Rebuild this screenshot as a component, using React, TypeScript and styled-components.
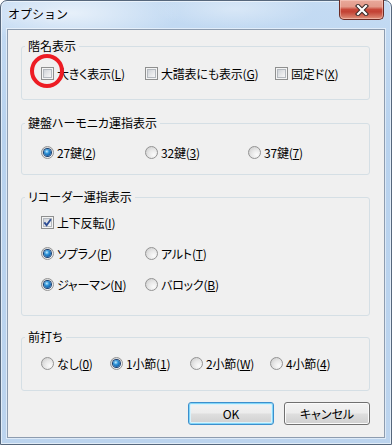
import React from "react";
import styled, { createGlobalStyle } from "styled-components";

const FONT = `"Noto Sans CJK JP", "Noto Sans", sans-serif`;

const COLORS = {
  client: "#f0f0f0",
  groupLine: "#d5dfe5",
  boxBorder: "#8e8f8f",
  text: "#000",
};

const GlobalStyle = createGlobalStyle`
  html, body { margin: 0; padding: 0; background: #fff; }
  body { font-family: ${FONT}; }
`;

const Window = styled.div`
  position: relative;
  width: 392px;
  height: 445px;
  box-sizing: border-box;
  display: flex;
  flex-direction: column;
  border: 1px solid #56677c;
  border-radius: 7px 7px 0 0;
  background:
    radial-gradient(ellipse 110px 30px at 18% 12px, rgba(255, 255, 255, 0.6), transparent),
    radial-gradient(ellipse 80px 20px at 60% 8px, rgba(255, 255, 255, 0.35), transparent),
    linear-gradient(180deg, #c4dbf3 0%, #b8d2ee 30%, #bcd4ee 100%);
  box-shadow: inset 0 0 0 1px rgba(255, 255, 255, 0.55);
  font-family: ${FONT};
  font-size: 12px;
  color: ${COLORS.text};
`;

const TitleBar = styled.div`
  height: 28px;
  display: flex;
  align-items: flex-start;
  justify-content: space-between;
  flex: none;
`;

const Title = styled.span`
  padding-left: 7px;
  line-height: 26px;
  font-size: 12px;
  text-shadow: 0 0 6px rgba(255, 255, 255, 0.9);
`;

const CloseButton = styled.div`
  width: 45px;
  height: 20px;
  margin: -1px 7px 0 0;
  box-sizing: border-box;
  border: 1px solid #6b2b24;
  border-top: none;
  border-radius: 0 0 5px 5px;
  background: linear-gradient(
    180deg,
    #e9a99b 0%,
    #e39a8a 35%,
    #c8493a 50%,
    #c24234 62%,
    #d3705d 85%,
    #e1937c 100%
  );
  box-shadow: inset 0 0 0 1px rgba(255, 220, 210, 0.45);
  display: flex;
  align-items: center;
  justify-content: center;
`;

const Client = styled.div`
  flex: 1;
  margin: 0 6px 6px;
  border: 1px solid #8d9caf;
  background: ${COLORS.client};
  box-shadow: 0 0 0 1px rgba(255, 255, 255, 0.5);
  padding: 9px 14px 0 13px;
  display: flex;
  flex-direction: column;
`;

const Group = styled.fieldset<{ $mt: number }>`
  margin: ${(p) => p.$mt}px 0 0;
  padding: 0;
  border: 1px solid ${COLORS.groupLine};
  border-radius: 3px;
  min-inline-size: auto;
`;

const Legend = styled.legend`
  margin-left: 3px;
  padding: 0 3px;
  line-height: 14px;
  font-size: 12px;
  font-feature-settings: "palt";
`;

const GroupBody = styled.div<{ $pt: number; $pb: number }>`
  padding: ${(p) => p.$pt}px 0 ${(p) => p.$pb}px 19px;
  display: flex;
  flex-direction: column;
  gap: 10px;
`;

const Row = styled.div`
  height: 21px;
  display: flex;
  align-items: center;
`;

const Option = styled.label<{ $w?: number }>`
  display: flex;
  align-items: center;
  gap: 3px;
  width: ${(p) => (p.$w ? `${p.$w}px` : "auto")};
  flex: none;
  white-space: nowrap;
  font-size: 12px;
  line-height: 14px;
  font-feature-settings: "palt";
  letter-spacing: -0.2px;
`;

const Key = styled.span`
  text-decoration: underline;
  text-underline-offset: 1px;
`;

const CheckBox = styled.span`
  position: relative;
  width: 13px;
  height: 13px;
  box-sizing: border-box;
  flex: none;
  border: 1px solid ${COLORS.boxBorder};
  background: #f4f4f4;

  &::before {
    content: "";
    position: absolute;
    inset: 1px;
    border: 1px solid #b4b9bf;
    background: linear-gradient(135deg, #cfd3d8 0%, #e6e7e9 55%, #f7f7f7 100%);
  }

  svg {
    position: absolute;
    left: -1px;
    top: -1px;
  }
`;

const Radio = styled.span<{ $checked?: boolean }>`
  width: 13px;
  height: 13px;
  box-sizing: border-box;
  flex: none;
  border-radius: 50%;
  border: 1px solid #939393;
  background: radial-gradient(circle at 70% 70%, #fbfbfb 0%, #e8e8e8 45%, #c8c8c8 100%);
  display: flex;
  align-items: center;
  justify-content: center;

  &::after {
    content: "";
    display: ${(p) => (p.$checked ? "block" : "none")};
    width: 7px;
    height: 7px;
    border-radius: 50%;
    background: radial-gradient(circle at 40% 35%, #c6ecff 0%, #2f94d8 35%, #0a4b94 85%);
    box-shadow: 0 0 0 1px #1a3f70;
  }
`;

const ButtonRow = styled.div`
  margin-top: 11px;
  display: flex;
  justify-content: flex-end;
  gap: 10px;
`;

const Button = styled.button<{ $default?: boolean }>`
  width: 86px;
  height: 23px;
  box-sizing: border-box;
  padding: 0;
  border-radius: 3px;
  border: 1px solid ${(p) => (p.$default ? "#3c8fcd" : "#707070")};
  box-shadow: ${(p) =>
    p.$default
      ? "inset 0 0 0 1px #82d6f8, inset 0 0 0 2px #d8f2fc"
      : "inset 0 0 0 1px #fbfbfb"};
  background: linear-gradient(180deg, #f3f3f3 0%, #ececec 48%, #dedede 52%, #d0d0d0 100%);
  font-family: ${FONT};
  font-size: 12px;
  font-feature-settings: "palt";
  color: #000;
`;

const Annotation = styled.div`
  position: absolute;
  left: 29px;
  top: 53px;
  width: 34px;
  height: 34px;
  box-sizing: border-box;
  border: 4px solid #ed1c24;
  border-radius: 50%;
  pointer-events: none;
`;

const Check = ({ checked }: { checked?: boolean }) => (
  <CheckBox>
    {checked && (
      <svg width="13" height="13" viewBox="0 0 13 13">
        <path d="M3.3 6.4 L5.6 9.2 L9.9 3.2" fill="none" stroke="#2d4d94" strokeWidth="1.9" />
      </svg>
    )}
  </CheckBox>
);

const CloseGlyph = () => (
  <svg width="14" height="12" viewBox="0 0 14 12">
    <path d="M3 2 L11 10 M11 2 L3 10" stroke="#3a2a28" strokeWidth="4.2" strokeLinecap="square" />
    <path d="M3 2 L11 10 M11 2 L3 10" stroke="#fff" strokeWidth="2.2" strokeLinecap="square" />
  </svg>
);

const CheckOption = ({ w, label, k, checked }: { w?: number; label: string; k: string; checked?: boolean }) => (
  <Option $w={w}>
    <Check checked={checked} />
    <span>
      {label}(<Key>{k}</Key>)
    </span>
  </Option>
);

const RadioOption = ({ w, label, k, checked }: { w?: number; label: string; k: string; checked?: boolean }) => (
  <Option $w={w}>
    <Radio $checked={checked} />
    <span>
      {label}(<Key>{k}</Key>)
    </span>
  </Option>
);

export default function App() {
  return (
    <>
      <GlobalStyle />
      <Window>
        <TitleBar>
          <Title>オプション</Title>
          <CloseButton>
            <CloseGlyph />
          </CloseButton>
        </TitleBar>
        <Client>
          <Group $mt={0}>
            <Legend>階名表示</Legend>
            <GroupBody $pt={10} $pb={15}>
              <Row>
                <CheckOption w={104} label="大きく表示" k="L" />
                <CheckOption w={130} label="大譜表にも表示" k="G" />
                <CheckOption label="固定ド" k="X" />
              </Row>
            </GroupBody>
          </Group>

          <Group $mt={16}>
            <Legend>鍵盤ハーモニカ運指表示</Legend>
            <GroupBody $pt={12} $pb={11}>
              <Row>
                <RadioOption w={104} label="27鍵" k="2" checked />
                <RadioOption w={103} label="32鍵" k="3" />
                <RadioOption label="37鍵" k="7" />
              </Row>
            </GroupBody>
          </Group>

          <Group $mt={15}>
            <Legend>リコーダー運指表示</Legend>
            <GroupBody $pt={8} $pb={20}>
              <Row>
                <CheckOption label="上下反転" k="I" checked />
              </Row>
              <Row>
                <RadioOption w={104} label="ソプラノ" k="P" checked />
                <RadioOption label="アルト" k="T" />
              </Row>
              <Row>
                <RadioOption w={104} label="ジャーマン" k="N" checked />
                <RadioOption label="バロック" k="B" />
              </Row>
            </GroupBody>
          </Group>

          <Group $mt={14}>
            <Legend>前打ち</Legend>
            <GroupBody $pt={9} $pb={16}>
              <Row>
                <RadioOption w={69} label="なし" k="0" />
                <RadioOption w={80} label="1小節" k="1" checked />
                <RadioOption w={80} label="2小節" k="W" />
                <RadioOption label="4小節" k="4" />
              </Row>
            </GroupBody>
          </Group>

          <ButtonRow>
            <Button $default>OK</Button>
            <Button>キャンセル</Button>
          </ButtonRow>
        </Client>
        <Annotation />
      </Window>
    </>
  );
}
